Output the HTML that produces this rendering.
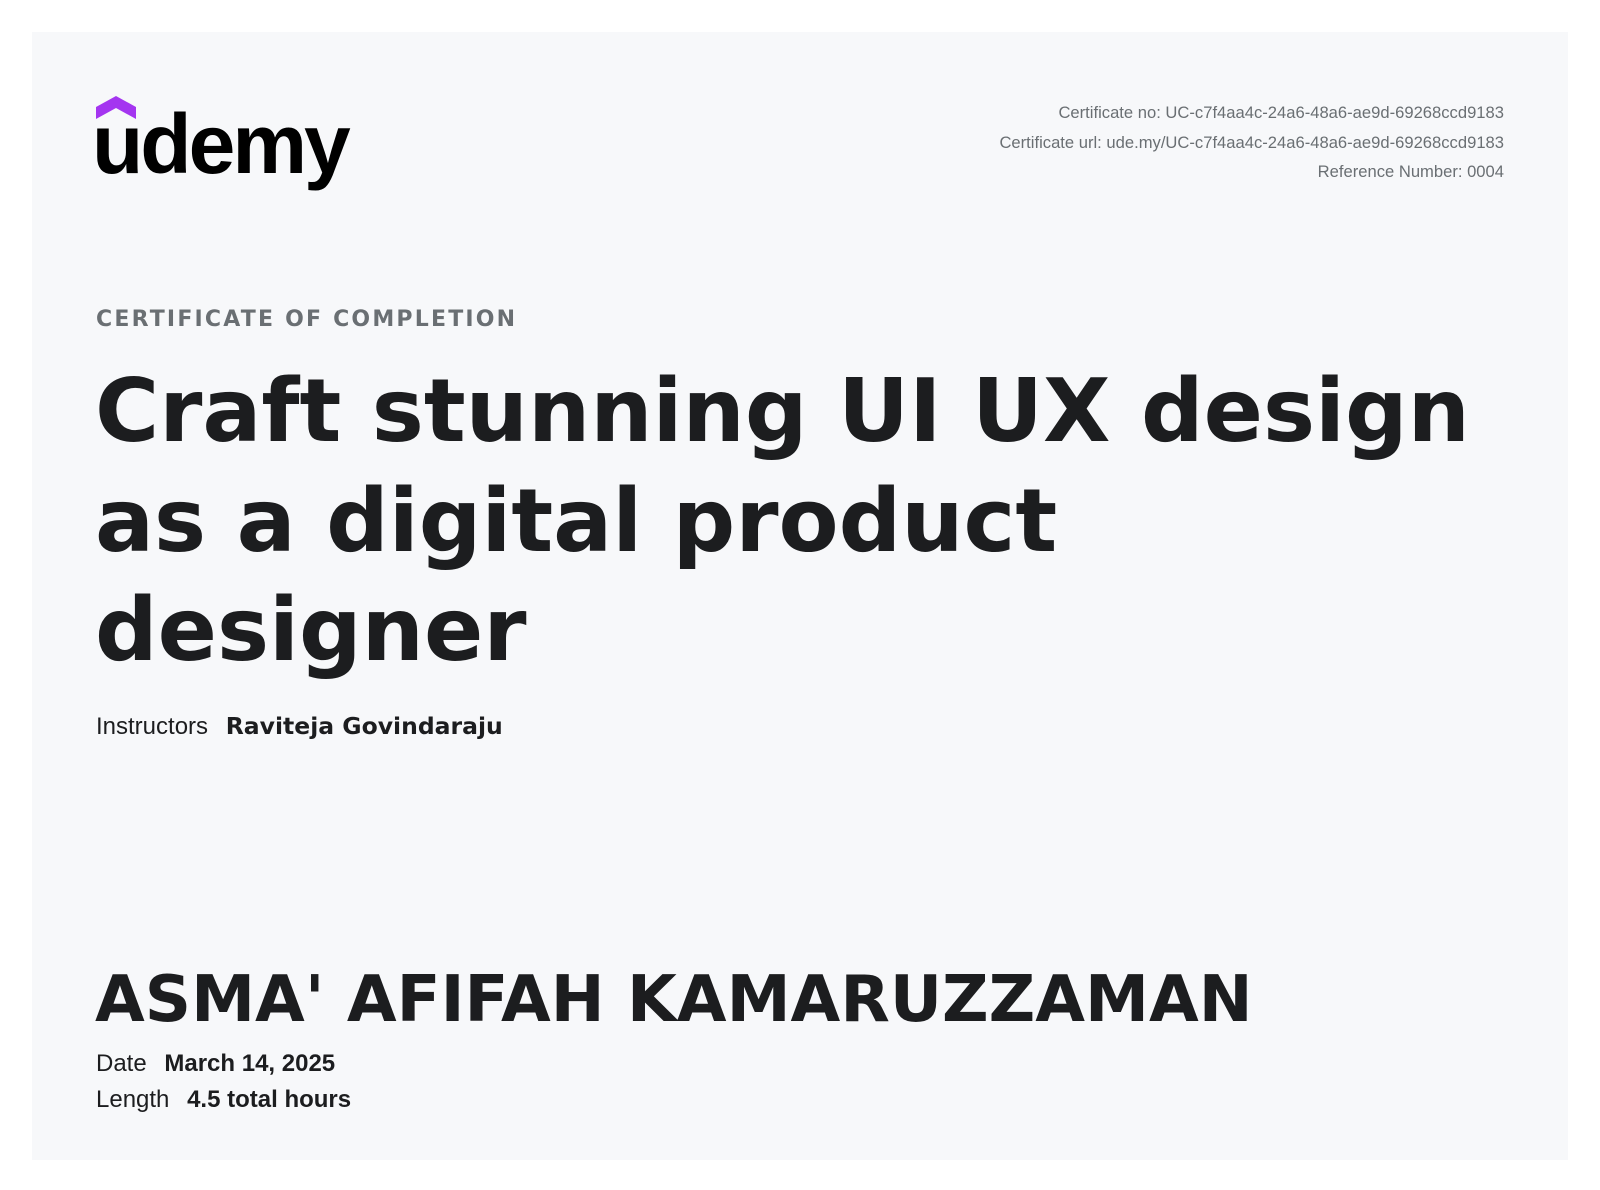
<!DOCTYPE html>
<html><head><meta charset="utf-8"><style>
html,body{margin:0;padding:0;background:#fff;}
body{width:1600px;height:1190px;position:relative;overflow:hidden;font-family:"Liberation Sans",sans-serif;}
.card{position:absolute;left:32px;top:32px;width:1536px;height:1128px;background:#f7f8fa;}
.a{position:absolute;white-space:nowrap;}
.meta{right:96px;text-align:right;font-size:16.6px;color:#6a6f73;line-height:29.5px;top:98px;}
.dj{font-family:"DejaVu Sans",sans-serif;font-weight:bold;color:#1c1d1f;}
</style></head><body>
<div class="card"></div>
<svg class="a" style="left:96px;top:95px" width="280" height="110">
<path d="M0 12 L20 1 L40 12 L40 24 L20 13 L0 24 Z" fill="#a435f0"/>
<text x="-4" y="78" font-family="Liberation Sans,sans-serif" font-weight="bold" font-size="84" letter-spacing="-3" fill="#000">udemy</text>
</svg>
<div class="a meta">Certificate no: UC-c7f4aa4c-24a6-48a6-ae9d-69268ccd9183<br>Certificate url: ude.my/UC-c7f4aa4c-24a6-48a6-ae9d-69268ccd9183<br>Reference Number: 0004</div>
<div class="a dj" style="left:96px;top:307px;font-size:22px;letter-spacing:2.2px;color:#6a6f73;">CERTIFICATE OF COMPLETION</div>
<div class="a dj" style="left:95px;top:357px;font-size:87.5px;line-height:109.6px;">Craft stunning UI UX design<br>as a digital product<br>designer</div>
<div class="a" style="left:96px;top:712px;font-size:24px;color:#1c1d1f;">Instructors <span class="dj" style="margin-left:11px;font-size:23.5px;">Raviteja Govindaraju</span></div>
<div class="a dj" style="left:95px;top:962px;font-size:64.3px;">ASMA' AFIFAH KAMARUZZAMAN</div>
<div class="a" style="left:96px;top:1050px;font-size:24px;color:#1c1d1f;">Date <b style="margin-left:11px;">March 14, 2025</b></div>
<div class="a" style="left:96px;top:1086px;font-size:24px;color:#1c1d1f;">Length <b style="margin-left:11px;">4.5 total hours</b></div>
</body></html>
